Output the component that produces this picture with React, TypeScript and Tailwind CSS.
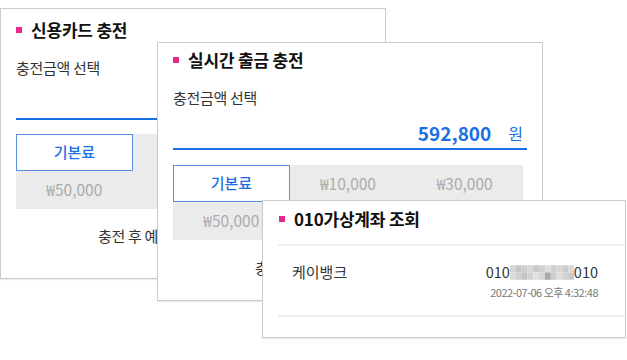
import React from "react";

const font = { fontFamily: '"Noto Sans CJK KR", "Noto Sans", sans-serif' };

const Title = ({ children }: { children: React.ReactNode }) => (
  <div className="flex items-center h-[20px]">
    <span className="w-[6px] h-[6px] bg-[#e8288a] mr-[9px]" />
    <span className="text-[17px] font-bold tracking-[-0.2px] text-[#111111] leading-[20px]">
      {children}
    </span>
  </div>
);

const AmountGrid = ({ mt }: { mt: string }) => (
  <div className={`grid grid-cols-3 w-[350px] bg-[#ebebeb] text-[15.5px] ${mt}`}>
    <div className="h-[37px] flex items-center justify-center bg-white border border-[#5a8fe0] text-[#1b6fe4] text-[15px] font-medium">
      기본료
    </div>
    <div className="h-[37px] flex items-center justify-center text-[#ababab]">₩10,000</div>
    <div className="h-[37px] flex items-center justify-center text-[#ababab]">₩30,000</div>
    <div className="h-[38px] flex items-center justify-center text-[#ababab]">₩50,000</div>
    <div className="h-[38px] flex items-center justify-center text-[#ababab]">₩100,000</div>
    <div className="h-[38px] flex items-center justify-center text-[#ababab]">직접입력</div>
  </div>
);

// pixelated mask over the account number
const mask = [
  ["#d4d4d4", "#c6c6c6", "#cdcdcd", "#d8d8d8", "#c9c9c9", "#d2d2d2", "#dedede", "#cfcfcf", "#d6d6d6", "#cbcbcb", "#d9d9d9"],
  ["#dadada", "#cfcfcf", "#c4c4c4", "#d1d1d1", "#e0e0e0", "#d5d5d5", "#a9a9a9", "#cccccc", "#dcdcdc", "#d0d0d0", "#c8c8c8"],
];

const Mask = () => (
  <svg width="64" height="15" viewBox="0 0 66 15">
    {mask.map((row, r) =>
      row.map((c, i) => <rect key={`${r}-${i}`} x={i * 6} y={r * 7.5} width="6" height="7.5" fill={c} />)
    )}
  </svg>
);

export default function App() {
  return (
    <div className="relative w-[627px] h-[360px] bg-white overflow-hidden" style={font}>
      {/* 신용카드 충전 */}
      <div className="absolute left-0 top-[8px] w-[386px] h-[271px] bg-white border border-[#cccccc] shadow-[0_1px_1px_rgba(0,0,0,0.08)] px-[15px] pt-[11px]">
        <Title>신용카드 충전</Title>
        <div className="mt-[18px] text-[15px] leading-[20px] tracking-[-0.3px] text-[#333333]">충전금액 선택</div>
        <div className="mt-[13px] h-[29px] w-[354px] border-b-2 border-[#1b6fe4]" />
        <AmountGrid mt="mt-[14px]" />
        <div className="mt-[17px] pl-[82px] text-[15px] leading-[20px] tracking-[-0.3px] text-[#333333]">
          충전 후 예상 잔액 안내
        </div>
      </div>

      {/* 실시간 출금 충전 */}
      <div className="absolute left-[157px] top-[42px] w-[386px] h-[259px] bg-white border border-[#cccccc] shadow-[0_1px_1px_rgba(0,0,0,0.08)] px-[15px] pt-[7px]">
        <Title>실시간 출금 충전</Title>
        <div className="mt-[18px] text-[15px] leading-[20px] tracking-[-0.3px] text-[#333333]">충전금액 선택</div>
        <div className="mt-[13px] w-[354px] flex items-center justify-end h-[29px] pb-[3px] border-b-2 border-[#1b6fe4] pr-[4px]">
          <span className="text-[19px] font-bold text-[#1b6fe4] leading-[24px]">592,800</span>
          <span className="ml-[17px] text-[16px] text-[#1b6fe4] leading-[24px]">원</span>
        </div>
        <AmountGrid mt="mt-[15px]" />
        <div className="mt-[18px] pl-[82px] text-[15px] leading-[20px] tracking-[-0.3px] text-[#333333]">
          충전 후 예상 잔액 안내
        </div>
      </div>

      {/* 010가상계좌 조회 */}
      <div className="absolute left-[262px] top-[200px] w-[364px] h-[138px] bg-white border border-[#cccccc] shadow-[0_1px_1px_rgba(0,0,0,0.08)] pt-[8px] pl-[15px]">
        <div className="pl-[1px]">
          <Title>010가상계좌 조회</Title>
        </div>
        <div className="mt-[15px] h-[2px] bg-[#efefef]" />
        <div className="flex justify-between pl-[14px] pr-[27px] pt-[16px] h-[69px]">
          <div className="text-[15px] leading-[20px] text-[#333333]">케이뱅크</div>
          <div className="flex flex-col items-end">
            <div className="flex items-center text-[14.5px] leading-[20px] text-[#333333]">
              010
              <Mask />
              010
            </div>
            <div className="mt-[2px] text-[11px] leading-[16px] tracking-[-0.5px] text-[#777777]">
              2022-07-06 오후 4:32:48
            </div>
          </div>
        </div>
        <div className="h-[2px] bg-[#efefef]" />
      </div>
    </div>
  );
}
